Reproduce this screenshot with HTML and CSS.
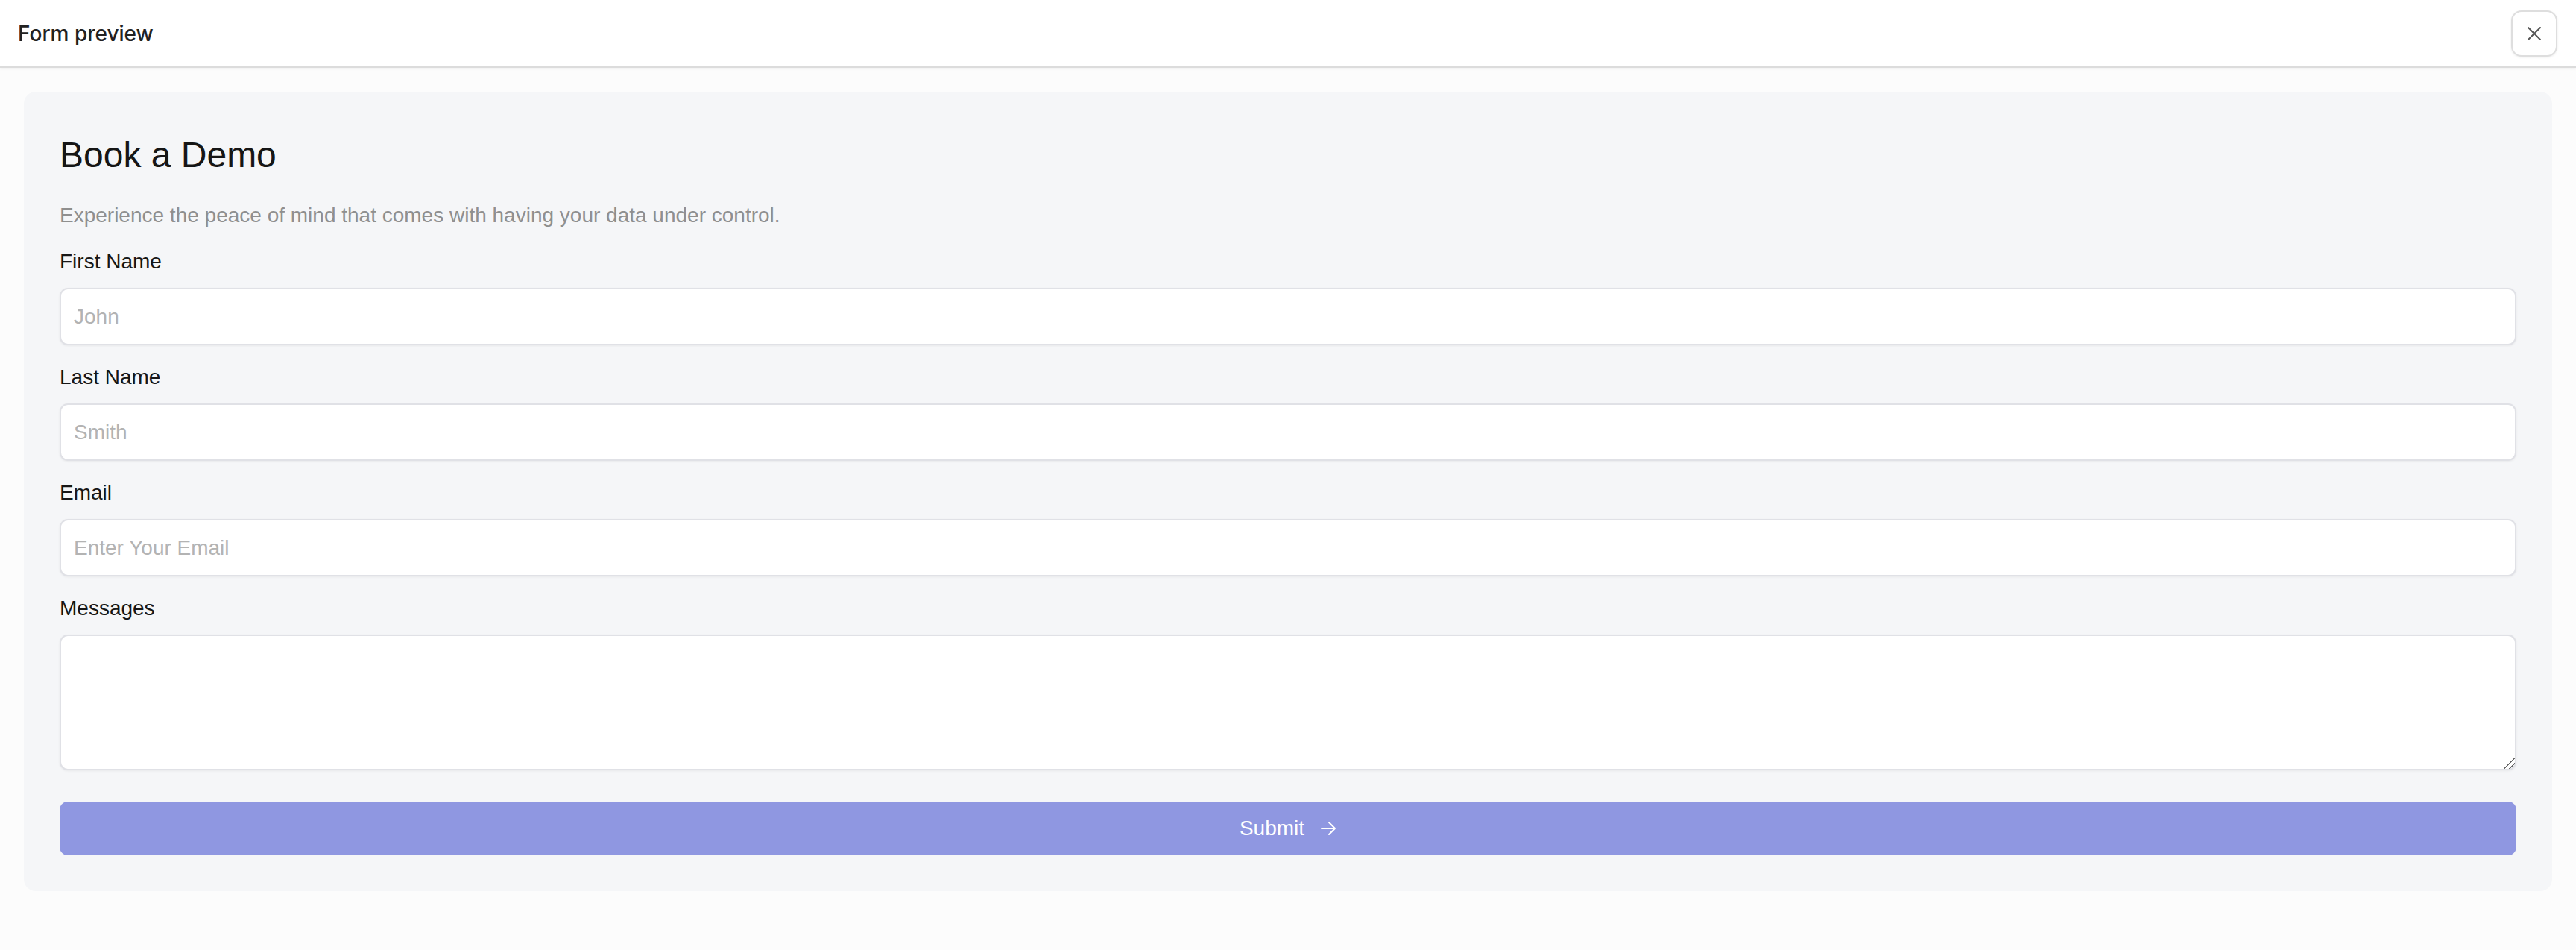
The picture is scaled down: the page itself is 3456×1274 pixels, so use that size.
FILE: index.html
```html
<!DOCTYPE html>
<html lang="en">
<head>
    <meta charset="UTF-8">
    <meta name="viewport" content="width=device-width, initial-scale=1.0">
    <title>Form preview</title>
    <link rel="stylesheet" href="styles.css">
</head>
<body>
    <header class="topbar">
        <span class="topbar-title">Form preview</span>
        <button class="close-btn" type="button" aria-label="Close">
            <svg width="20" height="20" viewBox="0 0 20 20" fill="none" stroke="#555" stroke-width="2" stroke-linecap="round">
                <path d="M2 2 L18 18 M18 2 L2 18"/>
            </svg>
        </button>
    </header>

    <main class="preview">
        <div class="card">
            <h1>Book a Demo</h1>
            <p class="lead">Experience the peace of mind that comes with having your data under control.</p>
            <form id="demoForm">
                <div class="field">
                    <label for="first_name">First Name</label>
                    <input type="text" id="first_name" name="first_name" placeholder="John">
                </div>
                <div class="field">
                    <label for="last_name">Last Name</label>
                    <input type="text" id="last_name" name="last_name" placeholder="Smith">
                </div>
                <div class="field">
                    <label for="email">Email</label>
                    <input type="text" id="email" name="email" placeholder="Enter Your Email">
                </div>
                <div class="field">
                    <label for="messages">Messages</label>
                    <textarea id="messages" name="messages"></textarea>
                </div>
                <button type="submit" class="submit-btn">
                    Submit
                    <svg width="22" height="22" viewBox="0 0 22 22" fill="none" stroke="#fff" stroke-width="2" stroke-linecap="round" stroke-linejoin="round">
                        <path d="M2 11 H20 M12 3 L20 11 L12 19"/>
                    </svg>
                </button>
            </form>
        </div>
    </main>
</body>
</html>
```

FILE: styles.css
```css
* { box-sizing: border-box; }
body { margin: 0; font-family: "Liberation Sans", Arial, sans-serif; background-color: #fcfcfc; color: #1a1a1a; }

.topbar { height: 91px; display: flex; align-items: center; justify-content: space-between; padding: 0 25px 0 24px; background-color: #fff; border-bottom: 2px solid #dcdcdc; box-shadow: 0 1px 4px rgba(0,0,0,0.06); }
.topbar-title { font-family: Inter, "Noto Sans", sans-serif; font-size: 28px; font-weight: 500; color: #222; }
.close-btn { width: 62px; height: 62px; display: flex; align-items: center; justify-content: center; background: #fff; border: 2px solid #dedede; border-radius: 14px; box-shadow: 0 1px 3px rgba(0,0,0,0.08); padding: 0; cursor: pointer; }

.preview { padding: 32px 32px 0; }
.card { background-color: #f5f6f8; border-radius: 16px; padding: 48px; }

h1 { margin: 9px 0 0; font-size: 48px; line-height: 56px; font-weight: 400; color: #161616; }
.lead { margin: 37px 0 0; font-size: 28px; line-height: 32px; color: #8f8f8f; }

#demoForm { margin-top: 30px; }
.field + .field { margin-top: 27px; }
label { display: block; font-size: 28px; line-height: 32px; margin-bottom: 19px; color: #161616; }
input[type="text"], textarea { display: block; width: 100%; padding: 0 17px; font-family: inherit; font-size: 28px; color: #222; background-color: #fff; border: 2px solid #e0e1e6; border-radius: 11px; box-shadow: 0 1px 3px rgba(0,0,0,0.06); outline: none; }
input[type="text"] { height: 77px; }
textarea { height: 182px; padding-top: 14px; resize: vertical; }
textarea::-webkit-resizer { background: linear-gradient(135deg, transparent 48%, #6a6a6a 48%, #6a6a6a 56%, transparent 56%, transparent 72%, #6a6a6a 72%, #6a6a6a 80%, transparent 80%); }
input::placeholder { color: #b3b3b3; }

.submit-btn { display: flex; align-items: center; justify-content: center; gap: 21px; width: 100%; height: 72px; margin-top: 42px; border: none; border-radius: 11px; background-color: #8f97e1; color: #fff; font-family: inherit; font-size: 28px; cursor: pointer; }
```
